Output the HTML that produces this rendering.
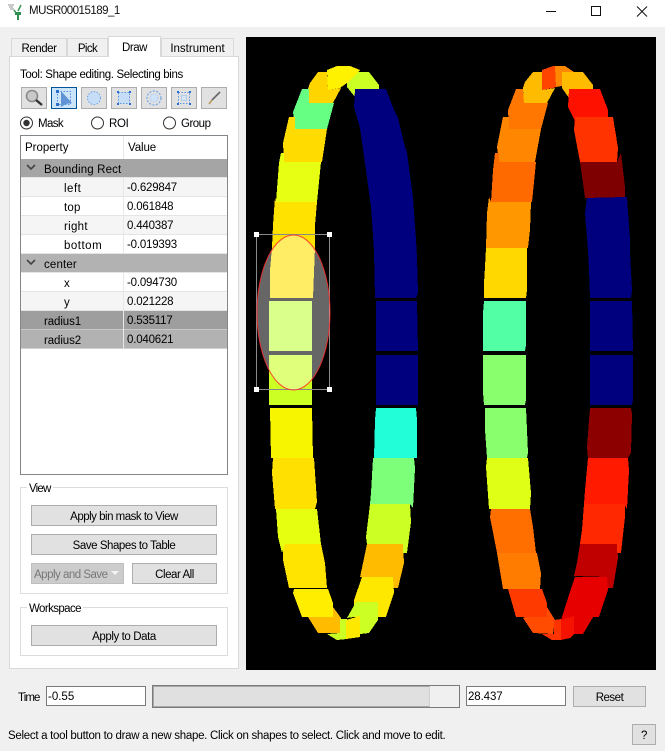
<!DOCTYPE html>
<html><head><meta charset="utf-8">
<style>
html,body{margin:0;padding:0}
body{width:665px;height:751px;background:#f0f0f0;position:relative;overflow:hidden;font-family:"Liberation Sans",sans-serif;font-size:11.5px;color:#000}
.a{position:absolute;box-sizing:border-box}
.t{position:absolute;white-space:nowrap;line-height:14px}
.b{position:absolute;box-sizing:border-box;background:#e1e1e1;border:1px solid #adadad;text-align:center;line-height:22px;white-space:nowrap;letter-spacing:-.45px}
.tb{position:absolute;box-sizing:border-box;width:26px;height:22px;top:87px;background:#e1e1e1;border:1px solid #adadad}
.tb svg{position:absolute;left:0;top:0}
.tab{position:absolute;box-sizing:border-box;background:#f0f0f0;border:1px solid #d9d9d9;border-bottom:none;text-align:center;top:38px;height:18px;line-height:20px;letter-spacing:-.45px}
.r{position:absolute;left:21px;width:206px;box-sizing:border-box;border-bottom:1px solid #e4e4e4}
.col{position:absolute;left:123px;width:1px;background:#e8e8e8}
.gb{position:absolute;box-sizing:border-box;border:1px solid #dcdcdc;background:#fff;left:20px;width:208px}
.in{position:absolute;box-sizing:border-box;background:#fff;border:1px solid #7a7a7a;height:20px;top:686px;line-height:20px;padding-left:1px}
.v{letter-spacing:-.2px}
</style></head><body>
<div class="a" style="left:0;top:0;width:665px;height:27px;background:#fff"></div>
<svg class="a" style="left:7px;top:3px" width="18" height="17" viewBox="0 0 18 17"><path d="M1 2h6M2 4h4M3 6h4" stroke="#aaa" stroke-width="1.2" fill="none"/><path d="M7 7l2 3M14 2l-3 6" stroke="#3f9a5a" stroke-width="1.6" fill="none"/><path d="M8 9h6v3h-2v5h-2v-5H8z" fill="#2f8f4f"/></svg>
<div class="t" style="left:29px;top:4px;font-size:11.5px;letter-spacing:-.5px;color:#111">MUSR00015189_1</div>
<svg class="a" style="left:540px;top:0" width="125" height="24" viewBox="0 0 125 24"><path d="M6 11.5h10" stroke="#111" fill="none"/><rect x="51.5" y="6.5" width="9" height="9" fill="none" stroke="#111"/><path d="M97 6.5l10 10M107 6.5l-10 10" stroke="#111" fill="none"/></svg>

<div class="a" style="left:9px;top:56px;width:230px;height:613px;background:#fff;border:1px solid #d9d9d9"></div>
<div class="tab" style="left:11px;width:56px">Render</div>
<div class="tab" style="left:67px;width:41px;letter-spacing:-.6px">Pick</div>
<div class="tab" style="left:161px;width:73px;letter-spacing:0">Instrument</div>
<div class="tab" style="left:108px;width:53px;top:36px;height:21px;background:#fff;line-height:22px">Draw</div>

<div class="t" style="left:20px;top:68px;letter-spacing:-.37px">Tool: Shape editing. Selecting bins</div>

<div class="tb" style="left:21px"><svg width="24" height="20" viewBox="0 0 24 20"><circle cx="10" cy="8" r="5.5" fill="#c9c9c9" stroke="#8a8a8a" stroke-width="1.6"/><path d="M14 12l6 5" stroke="#333" stroke-width="2.4"/></svg></div>
<div class="tb" style="left:51px;background:#cce4f7;border-color:#005499"><svg width="24" height="20" viewBox="0 0 24 20"><rect x="5.5" y="3.5" width="13" height="13" fill="none" stroke="#4d8fe0" stroke-dasharray="1.5 1.5"/><path d="M9 3l11 12-6 1-5 3z" fill="#5f93d6"/><g fill="#2a6fd0"><rect x="4" y="2" width="3" height="3"/><rect x="4" y="15" width="3" height="3"/></g></svg></div>
<div class="tb" style="left:81px"><svg width="24" height="20" viewBox="0 0 24 20"><circle cx="12" cy="10" r="6.5" fill="#c6ddf7" stroke="#6ea3e6" stroke-dasharray="1.5 1.5"/></svg></div>
<div class="tb" style="left:111px"><svg width="24" height="20" viewBox="0 0 24 20"><rect x="6.5" y="4.5" width="11" height="11" fill="#c6ddf7" stroke="#5b97e4" stroke-dasharray="1.5 1.5"/><g fill="#2a6fd0"><rect x="5" y="3" width="2" height="2"/><rect x="17" y="3" width="2" height="2"/><rect x="5" y="15" width="2" height="2"/><rect x="17" y="15" width="2" height="2"/></g></svg></div>
<div class="tb" style="left:141px"><svg width="24" height="20" viewBox="0 0 24 20"><circle cx="12" cy="10" r="7" fill="none" stroke="#6ea3e6" stroke-width="1.2" stroke-dasharray="2 1.5"/><circle cx="12" cy="10" r="4" fill="#cfe2f7" stroke="#a8c8ee" stroke-dasharray="1 1"/></svg></div>
<div class="tb" style="left:171px"><svg width="24" height="20" viewBox="0 0 24 20"><rect x="6.5" y="4.5" width="11" height="11" fill="none" stroke="#5b97e4" stroke-dasharray="1.5 1.5"/><rect x="9.5" y="7.5" width="5" height="5" fill="#d5e5f7" stroke="#8db5ea" stroke-dasharray="1 1"/><g fill="#2a6fd0"><rect x="5" y="3" width="2" height="2"/><rect x="17" y="3" width="2" height="2"/><rect x="5" y="15" width="2" height="2"/><rect x="17" y="15" width="2" height="2"/></g></svg></div>
<div class="tb" style="left:201px"><svg width="24" height="20" viewBox="0 0 24 20"><path d="M18 4l-8 8" stroke="#666" stroke-width="1.6"/><path d="M10 12l-3 4" stroke="#b59a55" stroke-width="1.6"/></svg></div>

<svg class="a" style="left:20px;top:115px" width="170" height="16" viewBox="0 0 170 16"><circle cx="6.5" cy="8" r="6" fill="#fff" stroke="#333"/><circle cx="6.5" cy="8" r="3.2" fill="#333"/><circle cx="77.5" cy="8" r="6" fill="#fff" stroke="#333"/><circle cx="149.5" cy="8" r="6" fill="#fff" stroke="#333"/></svg>
<div class="t" style="left:38px;top:117px;letter-spacing:-.6px">Mask</div>
<div class="t" style="left:109px;top:117px;letter-spacing:-.3px">ROI</div>
<div class="t" style="left:181px;top:117px;letter-spacing:-.5px">Group</div>

<div class="a" style="left:20px;top:135px;width:208px;height:340px;background:#fff;border:1px solid #82878c"></div>
<div class="r" style="top:159px;height:19px;background:#a5a5a5"></div>
<div class="r" style="top:178px;height:19px;background:#f5f5f5"></div>
<div class="r" style="top:197px;height:19px;background:#fff"></div>
<div class="r" style="top:216px;height:19px;background:#f5f5f5"></div>
<div class="r" style="top:235px;height:19px;background:#fff"></div>
<div class="r" style="top:254px;height:19px;background:#b2b2b2"></div>
<div class="r" style="top:273px;height:19px;background:#fff"></div>
<div class="r" style="top:292px;height:19px;background:#f5f5f5"></div>
<div class="r" style="top:311px;height:19px;background:#9e9e9e;border-bottom-color:#c8c8c8"></div>
<div class="r" style="top:330px;height:19px;background:#b2b2b2;border-bottom-color:#d0d0d0"></div>
<div class="col" style="top:136px;height:23px"></div>
<div class="col" style="top:178px;height:76px"></div>
<div class="col" style="top:273px;height:76px"></div>
<svg class="a" style="left:25px;top:160px" width="12" height="110" viewBox="0 0 12 110"><path d="M2 5l4 4 4-4M2 100l4 4 4-4" stroke="#444" stroke-width="1.6" fill="none"/></svg>
<div class="t" style="left:25px;top:141px">Property</div><div class="t" style="left:128px;top:141px;letter-spacing:-.1px">Value</div>
<div class="t" style="left:44px;top:163px;letter-spacing:.15px">Bounding Rect</div>
<div class="t" style="left:64px;top:182px;letter-spacing:.5px">left</div><div class="t v" style="left:127px;top:181px">-0.629847</div>
<div class="t" style="left:64px;top:201px;letter-spacing:.2px">top</div><div class="t v" style="left:127px;top:200px">0.061848</div>
<div class="t" style="left:64px;top:220px;letter-spacing:.3px">right</div><div class="t v" style="left:127px;top:219px">0.440387</div>
<div class="t" style="left:64px;top:239px;letter-spacing:.5px">bottom</div><div class="t v" style="left:127px;top:238px">-0.019393</div>
<div class="t" style="left:44px;top:258px;letter-spacing:.15px">center</div>
<div class="t" style="left:64px;top:277px">x</div><div class="t v" style="left:127px;top:276px">-0.094730</div>
<div class="t" style="left:64px;top:296px">y</div><div class="t v" style="left:127px;top:295px">0.021228</div>
<div class="t" style="left:44px;top:315px;letter-spacing:-.1px">radius1</div><div class="t v" style="left:127px;top:314px">0.535117</div>
<div class="t" style="left:44px;top:334px;letter-spacing:-.1px">radius2</div><div class="t v" style="left:127px;top:333px">0.040621</div>

<div class="gb" style="top:487px;height:107px"></div>
<div class="t" style="left:27px;top:482px;background:#fff;padding:0 2px;letter-spacing:-.8px">View</div>
<div class="b" style="left:31px;top:505px;width:186px;height:21px;letter-spacing:-.5px">Apply bin mask to View</div>
<div class="b" style="left:31px;top:534px;width:186px;height:21px">Save Shapes to Table</div>
<div class="b" style="left:31px;top:563px;width:93px;height:21px;background:#ccc;border-color:#bfbfbf;color:#787878;text-align:left;padding-left:2px;letter-spacing:-.5px">Apply and Save</div>
<svg class="a" style="left:110px;top:570px" width="10" height="6"><path d="M1 1h8l-4 4z" fill="#f4f4f4"/></svg>
<div class="b" style="left:132px;top:563px;width:85px;height:21px">Clear All</div>
<div class="gb" style="top:607px;height:49px"></div>
<div class="t" style="left:27px;top:602px;background:#fff;padding:0 2px;letter-spacing:-.6px">Workspace</div>
<div class="b" style="left:31px;top:625px;width:186px;height:21px;letter-spacing:-.4px">Apply to Data</div>

<svg class="a" style="left:246px;top:37px" width="410" height="633" viewBox="246 37 410 633">
<rect x="246" y="37" width="410" height="633" fill="#000"/>
<g shape-rendering="crispEdges">
<!-- left ring -->
<polygon fill="#ccff24" points="347,72 369,72 379,85 379,89 355,89 355,97 347,87"/>
<polygon fill="#fff200" points="327,70 337,66 350,66 360,70 347,83 340,88 328,90"/>
<polygon fill="#ffd500" points="318,72 327,72 328,90 341,88 333,103 309,103 308,89 310,83"/>
<polygon fill="#66ff84" points="302,89 309,89 309,103 334,103 327,129 295,129 293,112"/>
<polygon fill="#ffdb00" points="289,117 295,117 295,129 327,129 322,162 284,162 283,143"/>
<polygon fill="#e6ff12" points="281,153 284,153 284,162 321,162 317,202 276,202 279,163"/>
<polygon fill="#ffe200" points="275,197 276,202 317,202 315,225 315,247 313,298 270,298 270,270 272,247 273,225"/>
<polygon fill="#c1ff3c" points="269,301 312,301 312,351 269,351"/>
<polygon fill="#ccff24" points="269,355 312,355 312,405 269,405"/>
<polygon fill="#f8f500" points="270,408 312,408 313,458 271,458"/>
<polygon fill="#ffe000" points="273,458 314,458 317,502 315,509 275,509 272,473"/>
<polygon fill="#e6ff10" points="276,509 317,509 321,544 285,544 282,553 278,537"/>
<polygon fill="#ffe400" points="285,544 321,544 325,563 327,588 289,588 283,560 283,550"/>
<polygon fill="#ffbb00" points="308,617 333,607 341,618 340,633 318,633"/>
<polygon fill="#ffee00" points="294,589 328,589 333,603 333,617 302,617 293,593"/>
<polygon fill="#ccff24" points="327,634 340,633 340,619 347,619 347,639 337,640"/>
<polygon fill="#ffbb00" points="367,544 403,544 404,563 398,588 393,588 393,577 360,577 363,563"/>
<polygon fill="#ffe800" points="362,577 393,577 394,593 386,617 354,617 354,600"/>
<polygon fill="#ccff24" points="356,602 378,602 378,620 369,633 360,634 360,616 347,618"/>
<polygon fill="#ffe800" points="346,620 360,616 360,637 346,639"/>
<polygon fill="#ccff24" points="370,504 410,504 411,522 407,553 403,553 403,544 367,544 366,537"/>
<polygon fill="#7dff7a" points="373,458 414,458 415,468 413,508 410,504 370,504 371,493"/>
<polygon fill="#22ffd8" points="376,408 416,408 417,420 417,458 374,458 375,420"/>
<polygon fill="#00007f" points="376,355 418,355 418,405 376,405"/>
<polygon fill="#00007f" points="376,301 417,301 418,351 376,351"/>
<polygon fill="#00007f" points="355,89 386,89 394,110 398,118 404,143 407,153 411,183 413,198 416,240 417,258 418,293 416,298 375,298 374,250 371,207 365,163 360,128 354,107"/>
<!-- right ring -->
<polygon fill="#ffbb00" points="562,72 583,72 593,85 593,89 569,89 569,98 562,88"/>
<polygon fill="#ff8800" points="555,66 565,66 574,72 562,72 562,86 556,87"/>
<polygon fill="#ff4400" points="542,70 553,66 555,66 556,87 553,88 542,90"/>
<polygon fill="#ffbb00" points="533,72 542,72 542,90 555,88 547,103 524,103 523,88 525,82"/>
<polygon fill="#ff7700" points="516,89 523,89 524,103 548,103 541,129 509,129 508,110"/>
<polygon fill="#ff8600" points="503,117 509,117 509,129 541,129 535,162 499,162 497,147"/>
<polygon fill="#ff6a00" points="495,153 499,153 499,162 536,162 532,202 491,202 493,170"/>
<polygon fill="#ff9700" points="489,197 491,202 531,202 530,230 528,248 486,248 487,213"/>
<polygon fill="#ffd800" points="486,248 527,248 527,263 527,290 526,298 484,298 484,283 485,267"/>
<polygon fill="#52ffa5" points="484,301 526,301 526,345 525,351 483,351 483,313"/>
<polygon fill="#89ff6e" points="483,355 526,355 526,400 525,405 484,405 483,392"/>
<polygon fill="#89ff6e" points="485,408 526,408 527,430 528,453 527,458 487,458 485,430"/>
<polygon fill="#dfff16" points="487,458 528,458 531,493 530,509 489,509 486,467"/>
<polygon fill="#ff6f00" points="491,509 530,509 533,527 536,553 497,553 490,517"/>
<polygon fill="#ff7c00" points="497,553 537,553 541,573 540,589 503,589"/>
<polygon fill="#ff4c00" points="523,618 547,607 555,620 553,634 533,633"/>
<polygon fill="#ff3a00" points="508,589 542,589 547,603 547,617 516,617"/>
<polygon fill="#ff3300" points="542,634 554,634 554,620 561,619 561,640 552,640"/>
<polygon fill="#c00000" points="580,544 617,544 618,558 613,588 607,588 607,577 574,576 577,563"/>
<polygon fill="#e60000" points="568,598 575,577 607,577 608,590 599,617 593,617 583,634 574,634 574,616 561,620"/>
<polygon fill="#f51200" points="561,620 574,616 574,634 570,638 561,640"/>
<polygon fill="#ff2800" points="584,504 625,504 625,517 621,553 617,553 617,544 580,544 582,530"/>
<polygon fill="#ff1a00" points="588,458 628,458 629,470 627,509 624,504 584,504 585,490"/>
<polygon fill="#8c0000" points="590,408 631,408 632,414 631,453 628,458 588,458 587,447 589,420"/>
<polygon fill="#00007f" points="590,355 633,355 633,400 632,405 590,405"/>
<polygon fill="#00007f" points="590,301 632,301 633,351 590,351"/>
<polygon fill="#00007f" points="587,197 627,197 630,240 630,253 632,290 631,298 590,298 589,270 588,250 585,213"/>
<polygon fill="#7f0000" points="580,162 617,162 621,153 625,187 625,197 585,198 583,183"/>
<polygon fill="#ff3300" points="575,117 613,117 618,148 617,162 580,162 574,130"/>
<polygon fill="#ff1100" points="569,89 600,89 608,110 608,117 575,117 576,123 568,107"/>
</g>
<!-- selection -->
<rect x="256.5" y="234.5" width="73" height="155" fill="none" stroke="#8a8a8a"/>
<ellipse cx="293.5" cy="312.5" rx="36.5" ry="77.5" fill="#fff" fill-opacity=".4" stroke="#ff2a2a" stroke-opacity=".85"/>
<g fill="#fff"><rect x="254" y="232" width="5" height="5"/><rect x="327" y="232" width="5" height="5"/><rect x="254" y="387" width="5" height="5"/><rect x="327" y="387" width="5" height="5"/></g>
</svg>

<div class="t" style="left:18px;top:691px;letter-spacing:-.9px">Time</div>
<div class="in" style="left:46px;width:100px">-0.55</div>
<div class="a" style="left:152px;top:685px;width:308px;height:23px;background:#f0f0f0;border:1px solid #7a7a7a"></div>
<div class="a" style="left:153px;top:686px;width:277px;height:21px;background:#e0e0e0;border:1px solid #a8a8a8;border-right-color:#d0d0d0"></div>
<div class="in" style="left:466px;width:100px;letter-spacing:-.1px">28.437</div>
<div class="b" style="left:573px;top:686px;width:73px;height:21px;letter-spacing:-.5px">Reset</div>
<div class="t" style="left:8px;top:729px;letter-spacing:-.29px">Select a tool button to draw a new shape. Click on shapes to select. Click and move to edit.</div>
<div class="b" style="left:632px;top:724px;width:24px;height:21px">?</div>
</body></html>
